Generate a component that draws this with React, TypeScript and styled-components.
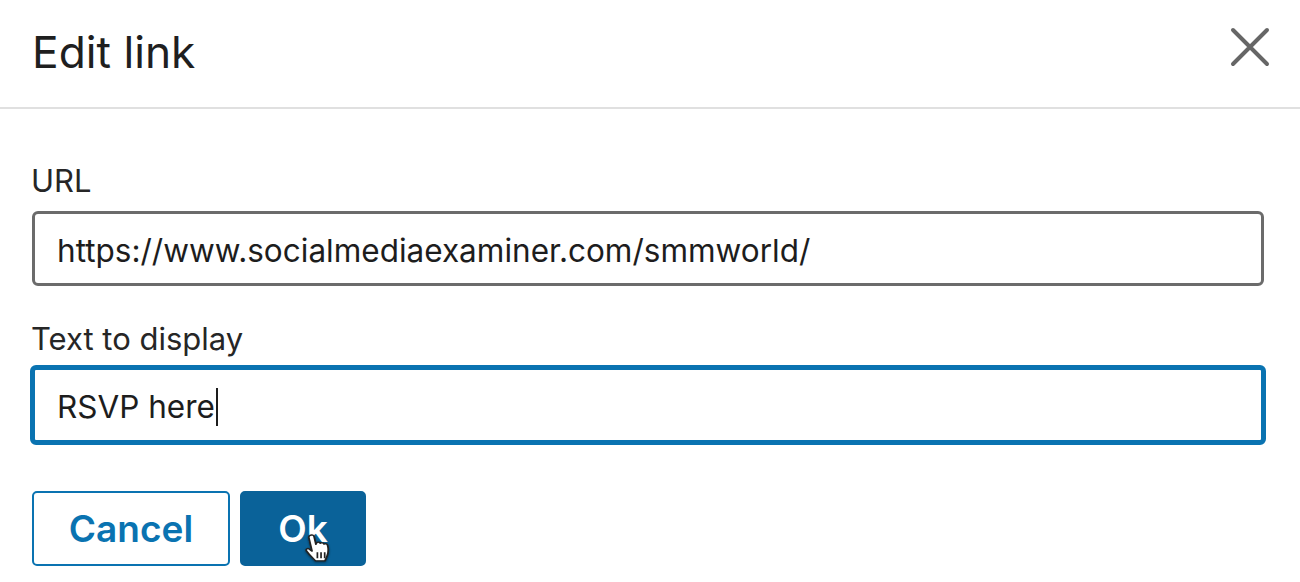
import React from "react";
import styled, { createGlobalStyle } from "styled-components";

const Global = createGlobalStyle`
  html, body { margin: 0; padding: 0; background: #fff; }
  body { font-family: Inter, "Liberation Sans", sans-serif; color: #1d1d1d; }
`;

const Dialog = styled.div`
  width: 1300px;
  height: 582px;
  overflow: hidden;
  background: #fff;
  display: flex;
  flex-direction: column;
`;

const Header = styled.header`
  height: 107px;
  border-bottom: 2px solid #e0e0e0;
  padding: 0 30px 0 32px;
  display: flex;
  align-items: flex-start;
  justify-content: space-between;
`;

const Title = styled.h1`
  margin: 25px 0 0;
  font-size: 44.300px;
  line-height: 54px;
  font-weight: 400;
  letter-spacing: 0;
  color: #1f1f1f;
`;

const Close = styled.svg`
  margin-top: 27px;
  width: 40px;
  height: 40px;
  display: block;
`;

const Body = styled.div`
  padding: 54px 36px 0 32px;
  display: flex;
  flex-direction: column;
`;

const Label = styled.label`
  display: block;
  font-size: 31px;
  line-height: 36px;
  color: #262626;
  margin-bottom: 12px;
  margin-left: -1px;
`;

const Field = styled.div<{ $focused?: boolean }>`
  box-sizing: border-box;
  height: ${(p) => (p.$focused ? "80px" : "75px")};
  margin: ${(p) => (p.$focused ? "0 -2px" : "0")};
  padding-left: 22px;
  padding-top: 3px;
  border: ${(p) => (p.$focused ? "5px solid #0a73b1" : "3px solid #6b6b6b")};
  border-radius: 6px;
  display: flex;
  align-items: center;
  font-size: 31.500px;
  color: #1d1d1d;
  background: #fff;
`;

const Caret = styled.span`
  display: inline-block;
  width: 2px;
  height: 38px;
  margin-left: 1px;
  background: #1d1d1d;
`;

const SecondLabel = styled(Label)`
  margin-top: 35px;
  margin-bottom: 8px;
`;

const Actions = styled.div`
  display: flex;
  gap: 10px;
  margin-top: 46px;
`;

const Button = styled.button<{ $primary?: boolean }>`
  position: relative;
  box-sizing: border-box;
  height: 75px;
  width: ${(p) => (p.$primary ? "126px" : "198px")};
  padding: 0;
  border: 2px solid ${(p) => (p.$primary ? "#0a6299" : "#0a73b1")};
  border-radius: 5px;
  background: ${(p) => (p.$primary ? "#0a6299" : "#fff")};
  color: ${(p) => (p.$primary ? "#fff" : "#0a73b1")};
  font-family: Inter, "Liberation Sans", sans-serif;
  font-size: 37px;
  font-weight: 600;
`;

const Pointer = styled.svg`
  position: absolute;
  left: 62px;
  top: 40px;
  width: 28px;
  height: 30px;
  filter: drop-shadow(0 1px 1px rgba(0, 0, 0, 0.45));
`;

export default function App() {
  return (
    <>
      <Global />
      <Dialog>
        <Header>
          <Title>Edit link</Title>
          <Close viewBox="0 0 40 40" fill="none" stroke="#666" strokeWidth="4" strokeLinecap="round">
            <path d="M3 3 L37 37 M37 3 L3 37" />
          </Close>
        </Header>
        <Body>
          <Label>URL</Label>
          <Field>https://www.socialmediaexaminer.com/smmworld/</Field>
          <SecondLabel>Text to display</SecondLabel>
          <Field $focused>
            RSVP here<Caret />
          </Field>
          <Actions>
            <Button>Cancel</Button>
            <Button $primary>
              Ok
              <Pointer viewBox="0 0 23 31" preserveAspectRatio="none">
                <path
                  d="M5 2.5c1.400-1 3-.3 3.300 1.200l1.500 8 .6-1.700c1-1 2.600-.6 3 .6 1-.9 2.600-.5 3 .8 1.200-.7 2.700 0 3 1.400.8 3.600.7 7-.3 10.500-.6 2.300-1.200 4-1.900 5.500H9.500C7.500 26 4.500 23 2 18.500c-.8-1.500.8-3 2.200-2l2.400 2.200L4 5c-.2-1 .2-2 1-2.500z"
                  fill="#fff"
                  stroke="#222"
                  strokeWidth="1.500"
                  strokeLinejoin="round"
                />
                <path d="M11 20v6M14 20v6M17 20v6" stroke="#222" strokeWidth="1.400" />
              </Pointer>
            </Button>
          </Actions>
        </Body>
      </Dialog>
    </>
  );
}
